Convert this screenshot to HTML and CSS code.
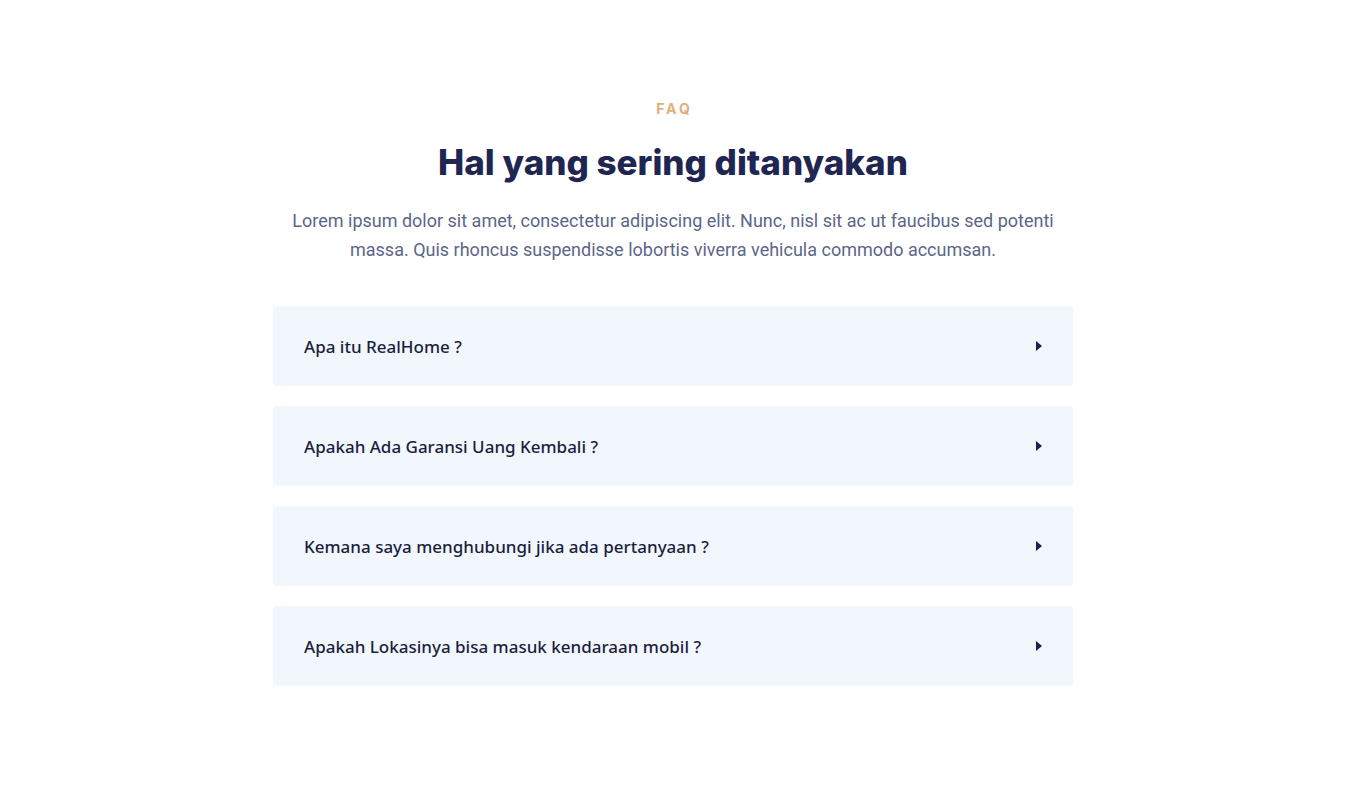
FILE: index.html
```html
<!DOCTYPE html>
<html lang="id">
<head>
<meta charset="utf-8">
<link rel="stylesheet" href="styles.css">
</head>
<body>
<section class="faq">
  <div class="eyebrow">FAQ</div>
  <h1 class="title">Hal yang sering ditanyakan</h1>
  <p class="lead">Lorem ipsum dolor sit amet, consectetur adipiscing elit. Nunc, nisl sit ac ut faucibus sed potenti massa. Quis rhoncus suspendisse lobortis viverra vehicula commodo accumsan.</p>
  <div class="list">
    <div class="item"><span class="q">Apa itu RealHome ?</span><svg class="caret" width="6" height="10" viewBox="0 0 6 10"><path d="M0 0 L6 5 L0 10 Z" fill="#1b2149"/></svg></div>
    <div class="item"><span class="q">Apakah Ada Garansi Uang Kembali ?</span><svg class="caret" width="6" height="10" viewBox="0 0 6 10"><path d="M0 0 L6 5 L0 10 Z" fill="#1b2149"/></svg></div>
    <div class="item"><span class="q">Kemana saya menghubungi jika ada pertanyaan ?</span><svg class="caret" width="6" height="10" viewBox="0 0 6 10"><path d="M0 0 L6 5 L0 10 Z" fill="#1b2149"/></svg></div>
    <div class="item"><span class="q">Apakah Lokasinya bisa masuk kendaraan mobil ?</span><svg class="caret" width="6" height="10" viewBox="0 0 6 10"><path d="M0 0 L6 5 L0 10 Z" fill="#1b2149"/></svg></div>
  </div>
</section>
</body>
</html>
```
FILE: styles.css
```css
html, body {
  margin: 0;
  padding: 0;
  background: #ffffff;
}
.faq {
  width: 800px;
  margin: 0 auto;
  padding-top: 100px;
  display: flex;
  flex-direction: column;
  align-items: center;
}
.eyebrow {
  font-family: "Inter", "Liberation Sans", sans-serif;
  font-weight: 700;
  font-size: 14px;
  letter-spacing: 3px;
  margin-right: -3px;
  color: #e2ae7c;
  line-height: 17px;
}
.title {
  margin: 22px 0 0;
  font-family: "Inter", "Liberation Sans", sans-serif;
  font-weight: 800;
  font-size: 35px;
  letter-spacing: 0;
  line-height: 46px;
  color: #1f2652;
}
.lead {
  margin: 21px 0 0;
  width: 780px;
  text-align: center;
  font-family: "Roboto", "Liberation Sans", sans-serif;
  font-size: 18px;
  line-height: 29px;
  color: #5c6689;
}
.list {
  margin-top: 42px;
  width: 800px;
  display: flex;
  flex-direction: column;
  gap: 20px;
}
.item {
  height: 80px;
  box-sizing: border-box;
  background: #f2f7fe;
  border-radius: 2px;
  padding: 0 31px;
  display: flex;
  align-items: center;
  justify-content: space-between;
}
.q {
  font-family: "Noto Sans", "Lato", sans-serif;
  font-weight: 500;
  font-size: 17px;
  color: #1b1f3d;
}
.caret {
  display: block;
}
```
